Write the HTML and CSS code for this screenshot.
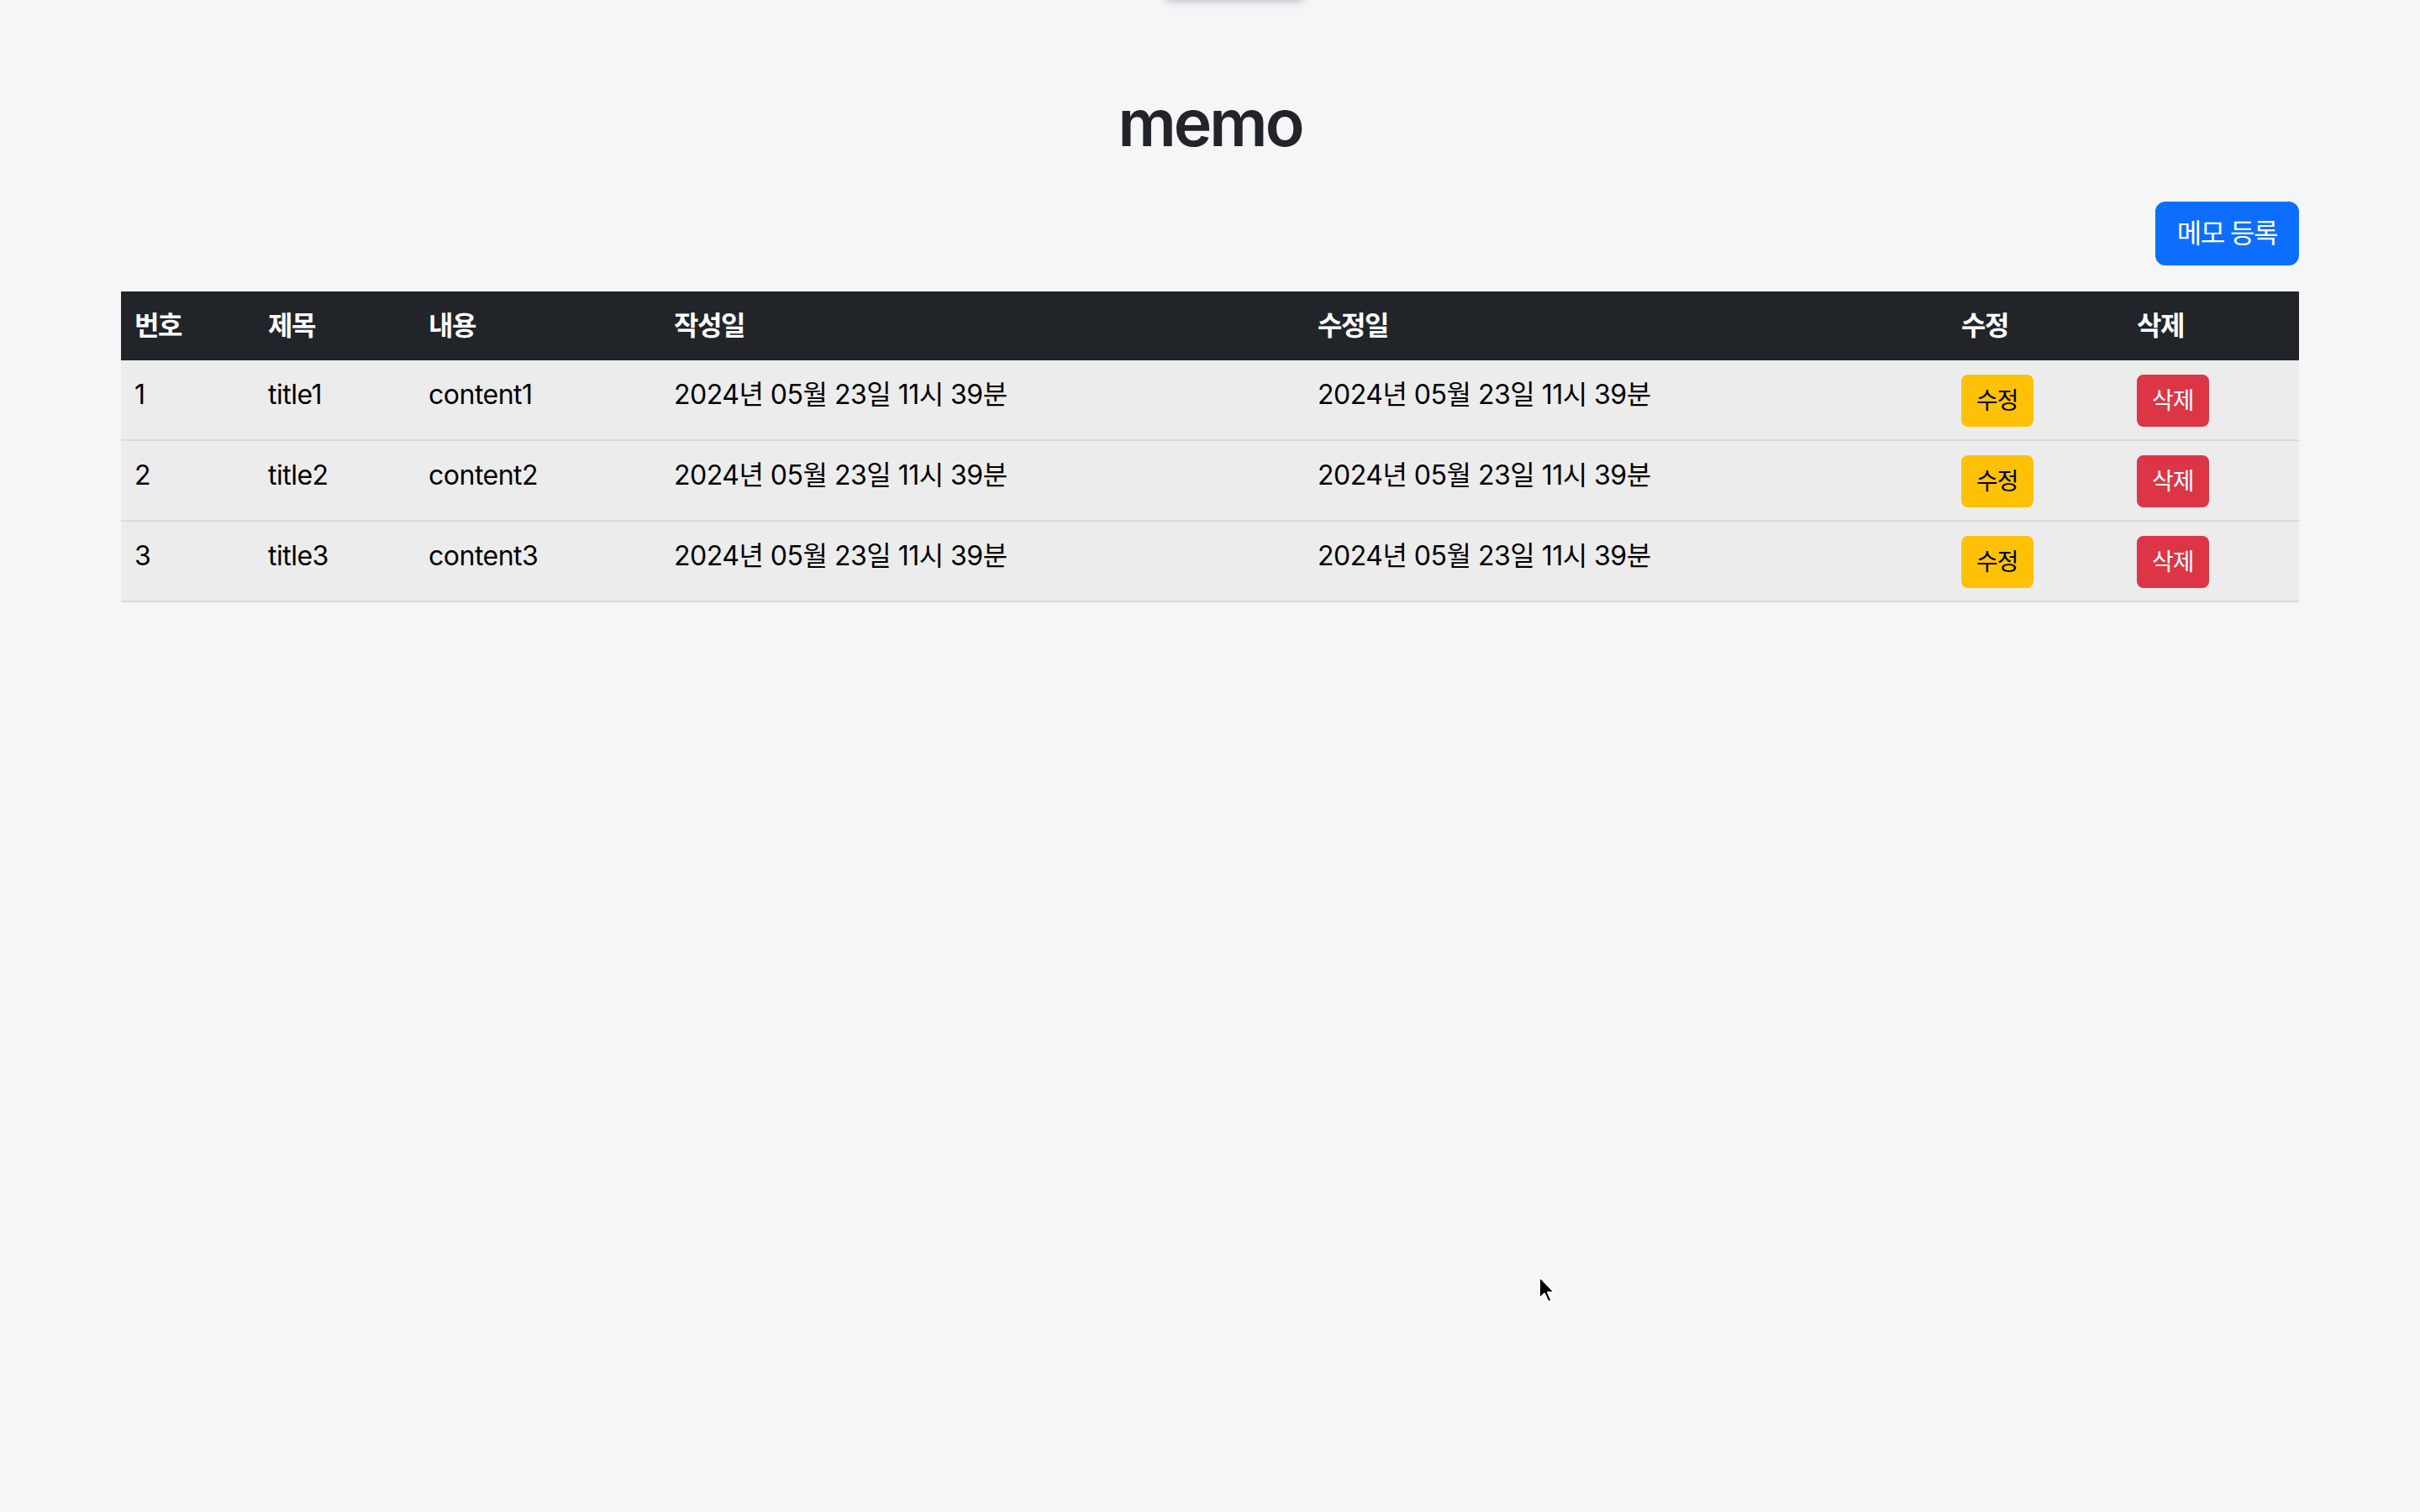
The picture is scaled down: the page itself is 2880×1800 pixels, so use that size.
FILE: index.html
```html
<!DOCTYPE html>
<html lang="ko">
<head>
<meta charset="utf-8">
<title>memo</title>
<link rel="stylesheet" href="styles.css">
</head>
<body>
<div class="top-shadow"></div>
<div class="container">
  <h1 class="title">memo</h1>
  <div class="actions">
    <button class="btn btn-primary">메모 등록</button>
  </div>
  <table class="table">
    <colgroup>
      <col class="c-no"><col class="c-title"><col class="c-content"><col class="c-date"><col class="c-date"><col class="c-btn"><col class="c-btn">
    </colgroup>
    <thead>
      <tr><th>번호</th><th>제목</th><th>내용</th><th>작성일</th><th>수정일</th><th>수정</th><th>삭제</th></tr>
    </thead>
    <tbody>
      <tr><td>1</td><td>title1</td><td>content1</td><td>2024년 05월 23일 11시 39분</td><td>2024년 05월 23일 11시 39분</td><td><button class="btn btn-sm btn-warning">수정</button></td><td><button class="btn btn-sm btn-danger">삭제</button></td></tr>
      <tr><td>2</td><td>title2</td><td>content2</td><td>2024년 05월 23일 11시 39분</td><td>2024년 05월 23일 11시 39분</td><td><button class="btn btn-sm btn-warning">수정</button></td><td><button class="btn btn-sm btn-danger">삭제</button></td></tr>
      <tr><td>3</td><td>title3</td><td>content3</td><td>2024년 05월 23일 11시 39분</td><td>2024년 05월 23일 11시 39분</td><td><button class="btn btn-sm btn-warning">수정</button></td><td><button class="btn btn-sm btn-danger">삭제</button></td></tr>
    </tbody>
  </table>
</div>
<svg class="cursor" width="24" height="36" viewBox="0 0 24 36" aria-hidden="true">
  <path d="M2 2 L2 28 L8 22 L12.5 32 L16.5 30.2 L12 20.5 L20 20.5 Z" fill="#000" stroke="#fff" stroke-width="2" stroke-linejoin="round"/>
</svg>
</body>
</html>
```
FILE: styles.css
```css
html, body {
  margin: 0;
  padding: 0;
}
body {
  background: #f5f6f6;
  font-family: "Inter", "Noto Sans CJK KR", sans-serif;
  font-size: 32px;
  line-height: 1.5;
  letter-spacing: -0.5px;
  color: #000;
  min-height: 1800px;
  position: relative;
  overflow: hidden;
}
.top-shadow {
  position: absolute;
  top: -24px;
  left: 1387px;
  width: 165px;
  height: 24px;
  background: #eef0f3;
  box-shadow: 0 2px 10px rgba(80, 90, 120, 0.35);
  border-radius: 6px;
}
.container {
  width: 2592px;
  margin: 0 auto;
}
.title {
  margin: 98px 0 46px;
  text-align: center;
  font-size: 77px;
  font-weight: 600;
  line-height: 96px;
  letter-spacing: -3px;
  color: #212529;
}
.actions {
  display: flex;
  justify-content: flex-end;
  margin-bottom: 31px;
}
.btn {
  font-family: inherit;
  border: 2px solid transparent;
  cursor: pointer;
  letter-spacing: -1.5px;
}
.btn-primary {
  background: #0d6efd;
  border-color: #0d6efd;
  color: #fff;
  font-size: 32px;
  line-height: 48px;
  padding: 12px 24px;
  border-radius: 12px;
}
.btn-sm {
  font-size: 28px;
  line-height: 42px;
  padding: 8px 16px;
  border-radius: 8px;
  letter-spacing: -1px;
}
.btn-warning {
  background: #ffc107;
  border-color: #ffc107;
  color: #000;
}
.btn-danger {
  background: #dc3545;
  border-color: #dc3545;
  color: #fff;
}
.table {
  width: 100%;
  border-collapse: collapse;
  table-layout: fixed;
}
.c-no { width: 159px; }
.c-title { width: 191px; }
.c-content { width: 292px; }
.c-date { width: 766px; }
.c-btn { width: 209px; }
.table th,
.table td {
  padding: 17px 16px 15px;
  text-align: left;
  vertical-align: top;
  border-bottom: 2px solid #d9dadb;
}
.table th {
  background: #212529;
  color: #fff;
  font-weight: 700;
  letter-spacing: -1.5px;
  border-bottom-color: #212529;
}
.table td {
  background: #ececec;
}
.cursor {
  position: absolute;
  left: 1830px;
  top: 1518px;
}
```
